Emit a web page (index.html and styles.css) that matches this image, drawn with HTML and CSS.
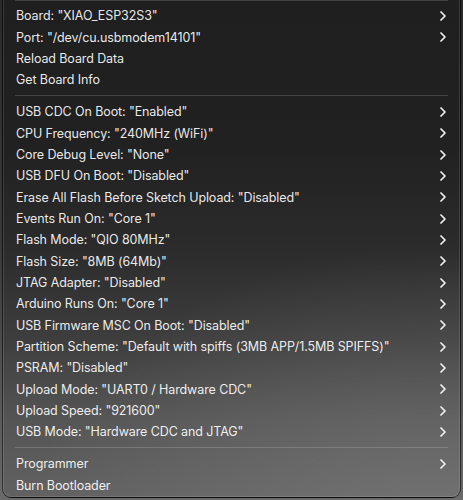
FILE: index.html
```html
<!DOCTYPE html>
<html>
<head>
<meta charset="utf-8">
<link rel="stylesheet" href="styles.css">
</head>
<body>
<div class="menu">
  <div class="sep"></div>
  <div class="item"><span>Board: "XIAO_ESP32S3"</span><svg class="chev" viewBox="0 0 6 10"><path d="M1 1L5 5L1 9"/></svg></div>
  <div class="item"><span>Port: "/dev/cu.usbmodem14101"</span><svg class="chev" viewBox="0 0 6 10"><path d="M1 1L5 5L1 9"/></svg></div>
  <div class="item"><span>Reload Board Data</span></div>
  <div class="item"><span>Get Board Info</span></div>
  <div class="sep"></div>
  <div class="item"><span>USB CDC On Boot: "Enabled"</span><svg class="chev" viewBox="0 0 6 10"><path d="M1 1L5 5L1 9"/></svg></div>
  <div class="item"><span>CPU Frequency: "240MHz (WiFi)"</span><svg class="chev" viewBox="0 0 6 10"><path d="M1 1L5 5L1 9"/></svg></div>
  <div class="item"><span>Core Debug Level: "None"</span><svg class="chev" viewBox="0 0 6 10"><path d="M1 1L5 5L1 9"/></svg></div>
  <div class="item"><span>USB DFU On Boot: "Disabled"</span><svg class="chev" viewBox="0 0 6 10"><path d="M1 1L5 5L1 9"/></svg></div>
  <div class="item"><span>Erase All Flash Before Sketch Upload: "Disabled"</span><svg class="chev" viewBox="0 0 6 10"><path d="M1 1L5 5L1 9"/></svg></div>
  <div class="item"><span>Events Run On: "Core 1"</span><svg class="chev" viewBox="0 0 6 10"><path d="M1 1L5 5L1 9"/></svg></div>
  <div class="item"><span>Flash Mode: "QIO 80MHz"</span><svg class="chev" viewBox="0 0 6 10"><path d="M1 1L5 5L1 9"/></svg></div>
  <div class="item"><span>Flash Size: "8MB (64Mb)"</span><svg class="chev" viewBox="0 0 6 10"><path d="M1 1L5 5L1 9"/></svg></div>
  <div class="item"><span>JTAG Adapter: "Disabled"</span><svg class="chev" viewBox="0 0 6 10"><path d="M1 1L5 5L1 9"/></svg></div>
  <div class="item"><span>Arduino Runs On: "Core 1"</span><svg class="chev" viewBox="0 0 6 10"><path d="M1 1L5 5L1 9"/></svg></div>
  <div class="item"><span>USB Firmware MSC On Boot: "Disabled"</span><svg class="chev" viewBox="0 0 6 10"><path d="M1 1L5 5L1 9"/></svg></div>
  <div class="item"><span>Partition Scheme: "Default with spiffs (3MB APP/1.5MB SPIFFS)"</span><svg class="chev" viewBox="0 0 6 10"><path d="M1 1L5 5L1 9"/></svg></div>
  <div class="item"><span>PSRAM: "Disabled"</span><svg class="chev" viewBox="0 0 6 10"><path d="M1 1L5 5L1 9"/></svg></div>
  <div class="item"><span>Upload Mode: "UART0 / Hardware CDC"</span><svg class="chev" viewBox="0 0 6 10"><path d="M1 1L5 5L1 9"/></svg></div>
  <div class="item"><span>Upload Speed: "921600"</span><svg class="chev" viewBox="0 0 6 10"><path d="M1 1L5 5L1 9"/></svg></div>
  <div class="item"><span>USB Mode: "Hardware CDC and JTAG"</span><svg class="chev" viewBox="0 0 6 10"><path d="M1 1L5 5L1 9"/></svg></div>
  <div class="sep"></div>
  <div class="item"><span>Programmer</span><svg class="chev" viewBox="0 0 6 10"><path d="M1 1L5 5L1 9"/></svg></div>
  <div class="item"><span>Burn Bootloader</span></div>
</div>
</body>
</html>
```
FILE: styles.css
```css
html, body {
  margin: 0;
  padding: 0;
  height: 500px;
  overflow: hidden;
}
body {
  background: linear-gradient(to bottom, #2a2a2a 0%, #3a3a3a 50%, #6a6a6a 100%);
  font-family: Inter, "Liberation Sans", sans-serif;
}
.menu {
  margin: -5.33px 0 0 2px;
  width: 447px;
  padding: 0 5px 1px 5px;
  box-sizing: content-box;
  border: 1px solid rgba(0, 0, 0, 0.55);
  border-top: none;
  border-radius: 0 0 9px 9px;
  box-shadow: inset 0 0 0 1px rgba(255, 255, 255, 0.12);
  background:
    radial-gradient(ellipse 420px 300px at 95% 110%, rgba(130,130,130,0.55), rgba(130,130,130,0) 100%),
    linear-gradient(to bottom, #1f1f1f 0%, #212121 30%, #2b2b2b 50%, #3d3d3d 68%, #555 85%, #616161 100%);
}
.sep {
  height: 10.67px;
  display: flex;
  align-items: center;
  margin: 0 7px;
}
.sep::after {
  content: "";
  display: block;
  width: 100%;
  height: 1px;
  background: rgba(255, 255, 255, 0.16);
}
.item {
  height: 21.33px;
  display: flex;
  align-items: center;
  justify-content: space-between;
  padding: 0 9px 0 8px;
  color: rgba(255, 255, 255, 0.92);
  font-size: 12.5px;
  letter-spacing: -0.1px;
}
.chev {
  width: 6px;
  height: 10px;
  fill: none;
  stroke: #f2f2f2;
  stroke-width: 1.7;
  stroke-linecap: round;
  stroke-linejoin: round;
}
```
